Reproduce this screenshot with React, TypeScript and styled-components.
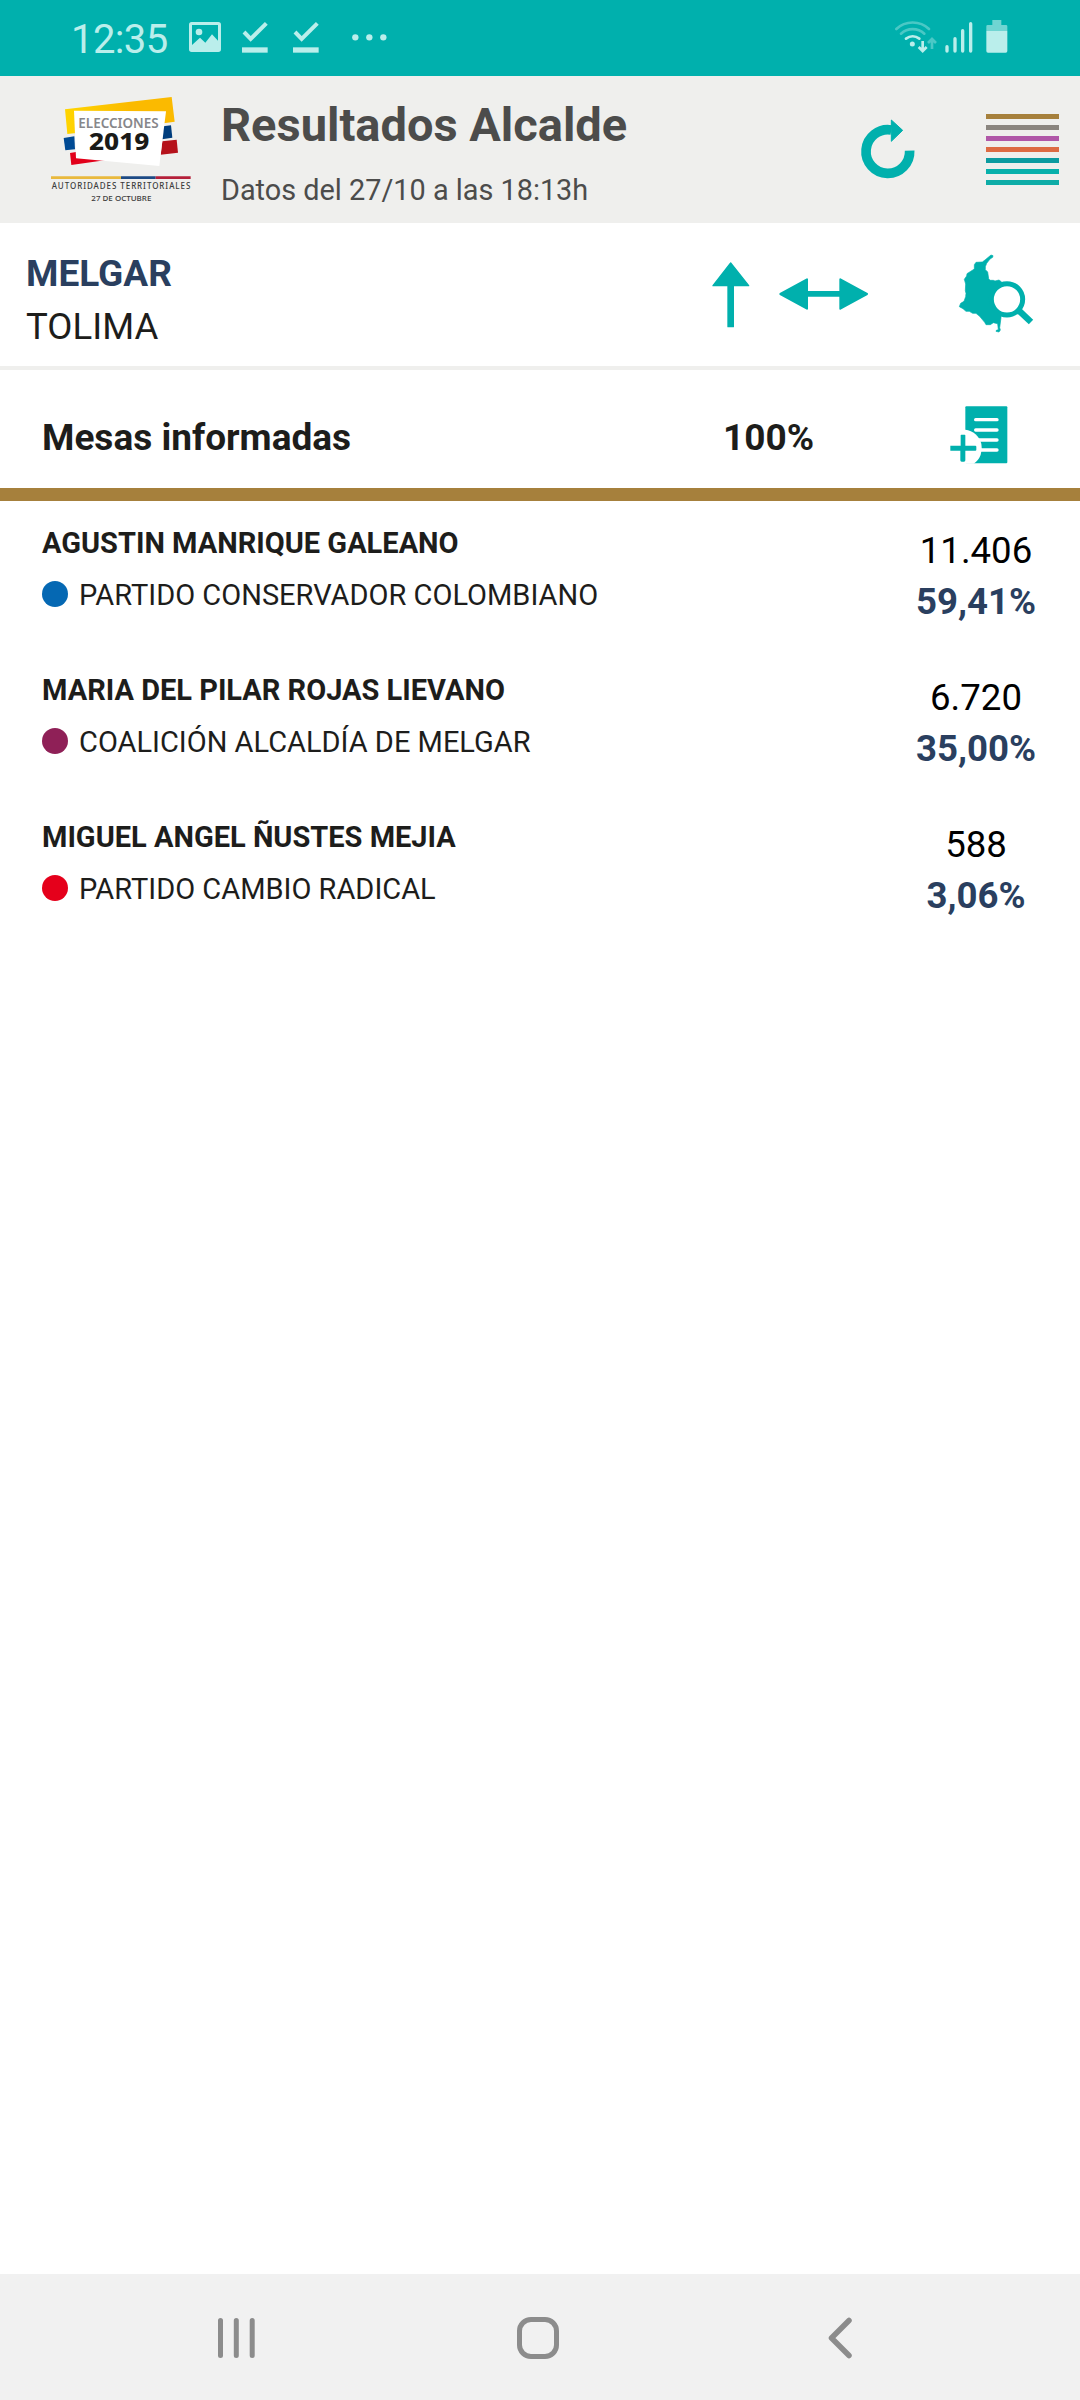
import React from 'react';
import styled, { createGlobalStyle } from 'styled-components';

const teal = '#00b0ad';
const navy = '#2a3f5f';
const ink = '#1d1d1b';

const GlobalStyle = createGlobalStyle`
  * { box-sizing: border-box; }
  body { margin: 0; background: #fff; font-family: Roboto, "Noto Sans", sans-serif; }
  svg { display: block; flex: none; overflow: visible; }
`;

const Screen = styled.div`
  display: flex;
  flex-direction: column;
  width: 1080px;
  height: 2400px;
  background: #fff;
`;

const StatusBar = styled.div`
  display: flex;
  justify-content: space-between;
  height: 76px;
  padding: 0 72px 0 71px;
  background: ${teal};
  color: #baeeeb;
`;

const StatusGroup = styled.div<{ $gap: number; $top: number }>`
  display: flex;
  align-items: flex-start;
  gap: ${(p) => p.$gap}px;
  padding-top: ${(p) => p.$top}px;
`;

const Clock = styled.span`
  width: 97px;
  margin-right: -4px;
  font-size: 40px;
  line-height: 36px;
  letter-spacing: -0.6px;
`;

const CheckSlot = styled.div`
  margin-left: -4px;
`;

const MoreSlot = styled.div`
  padding: 12px 0 0 8px;
`;

const Header = styled.header`
  display: flex;
  height: 147px;
  padding-left: 30px;
  background: #efefed;
`;

const LogoBox = styled.div`
  padding-top: 4px;
`;

const Heading = styled.div`
  width: 651px;
  padding: 19px 0 0 11px;
  color: #4c4c4b;
`;

const Title = styled.h1`
  margin: 0 0 15px;
  font-size: 47px;
  line-height: 60px;
  font-weight: 700;
  white-space: nowrap;
`;

const Subtitle = styled.div`
  font-size: 28.85px;
  line-height: 40px;
  white-space: nowrap;
`;

const RefreshButton = styled.div`
  width: 125px;
  padding-top: 43px;
`;

const MenuButton = styled.div`
  display: flex;
  flex-direction: column;
  gap: 6px;
  width: 73px;
  padding-top: 38px;
`;

const MenuBar = styled.span<{ $color: string }>`
  height: 5px;
  background: ${(p) => p.$color};
`;

const PlaceBar = styled.section`
  display: flex;
  height: 147px;
  padding-left: 26px;
  border-bottom: 4px solid #efefed;
`;

const PlaceNames = styled.div`
  width: 686px;
  padding-top: 25px;
  line-height: 52px;
`;

const Municipality = styled.div`
  color: ${navy};
  font-size: 37px;
  font-weight: 700;
`;

const Department = styled.div`
  padding-top: 1px;
  color: ${ink};
  font-size: 36.6px;
`;

const IconSlot = styled.div<{ $width: number; $top: number }>`
  width: ${(p) => p.$width}px;
  padding-top: ${(p) => p.$top}px;
`;

const TablesBar = styled.section`
  display: flex;
  height: 131px;
  padding-left: 42px;
  border-bottom: 13px solid #a6803c;
  color: ${ink};
  font-size: 37px;
  font-weight: 700;
  line-height: 52px;
`;

const TablesLabel = styled.div`
  width: 681px;
  padding-top: 42px;
`;

const TablesValue = styled.div`
  width: 227px;
  padding-top: 42px;
`;

const Results = styled.main`
  flex: 1;
`;

const Candidate = styled.article`
  display: flex;
  justify-content: space-between;
  height: 147px;
  padding-left: 42px;
`;

const CandidateInfo = styled.div`
  padding-top: 16px;
  color: ${ink};
  line-height: 52px;
  white-space: nowrap;
`;

const CandidateName = styled.div`
  font-size: 29px;
  font-weight: 700;
`;

const Party = styled.div`
  display: flex;
  align-items: center;
  gap: 11px;
  font-size: 29px;
`;

const PartyDot = styled.span<{ $color: string }>`
  width: 26px;
  height: 26px;
  margin-bottom: 2px;
  border-radius: 50%;
  background: ${(p) => p.$color};
`;

const Score = styled.div`
  width: 208px;
  padding-top: 24px;
  font-size: 36.6px;
  text-align: center;
`;

const Votes = styled.div`
  color: #000;
  line-height: 52px;
`;

const Percent = styled.div`
  color: ${navy};
  font-weight: 700;
  line-height: 50px;
`;

const NavBar = styled.nav`
  display: flex;
  align-items: flex-start;
  height: 126px;
  padding: 43px 0 0 218px;
  background: #f1f1f1;
`;

const NavItem = styled.div<{ $width: number }>`
  width: ${(p) => p.$width}px;
`;

const PictureIcon = () => (
  <svg width="32" height="30" viewBox="567 65 96 90">
    <path fill="currentColor" fillRule="evenodd" d="M575 65H655Q663 65 663 73V147Q663 155 655 155H575Q567 155 567 147V73Q567 65 575 65ZM576 74V134L600 112L616 127L636 102L654 121V74Z" />
    <circle cx="597" cy="95" r="10" fill="currentColor" />
  </svg>
);

const CheckIcon = () => (
  <svg width="26" height="31" viewBox="727 65 78 93">
    <path fill="none" stroke="currentColor" strokeWidth="12" d="M733 95L753 116L800 69" />
    <path fill="currentColor" d="M727 141H804V157H727Z" />
  </svg>
);

const DotsIcon = () => (
  <svg width="35" height="7" viewBox="1055 101 105 21" fill="currentColor">
    <circle cx="1065" cy="111" r="9.5" />
    <circle cx="1107" cy="111" r="9.5" />
    <circle cx="1149" cy="111" r="9.5" />
  </svg>
);

const WifiIcon = () => (
  <svg width="42" height="33" viewBox="107 60 126 99" fill="none" stroke="currentColor" strokeWidth="8" strokeLinecap="round">
    <g opacity="0.4">
      <path d="M111 87C138 61 182 61 209 87" />
      <path d="M125 101C145 83 175 83 195 101" />
    </g>
    <path d="M140 116C152 107 168 107 180 116" />
    <circle cx="159" cy="132" r="7.5" fill="currentColor" stroke="none" />
    <path strokeLinecap="butt" d="M190 123V152M178 141L190 153L202 141" />
    <path opacity="0.4" strokeLinecap="butt" d="M218 147V118M206 129L218 117L230 129" />
  </svg>
);

const SignalIcon = () => (
  <svg width="28" height="31" viewBox="257 60 84 93" stroke="currentColor" strokeWidth="10" strokeLinecap="round">
    <path d="M263 140V153M287 116V153M310 92V153M334 71V153" />
  </svg>
);

const BatteryIcon = () => (
  <svg width="22" height="33" viewBox="380 60 66 99" fill="currentColor">
    <path opacity="0.6" d="M399 60H426V75H440Q444 75 444 79V93H381V79Q381 75 385 75H399Z" />
    <path d="M381 93H444V153Q444 158 439 158H386Q381 158 381 153Z" />
  </svg>
);

const Logo = () => (
  <svg width="180" height="140" viewBox="0 0 540 420">
    <defs>
      <linearGradient id="yellow" x1="0" x2="1">
        <stop offset="0" stopColor="#ffd500" />
        <stop offset="0.6" stopColor="#fbba00" />
      </linearGradient>
    </defs>
    <path fill="url(#yellow)" d="M105 88L425 51L434 125L401 130L388 145L132 160L112 162Z" />
    <path fill="#004a94" d="M101 174L133 169L135 208L106 211Z" />
    <path fill="#003d7d" d="M399 139L423 136L427 173L396 178Z" />
    <path fill="#e2001a" d="M120 219L138 216L140 225L235 239L124 255Z" />
    <path fill="#b5121b" d="M397 184L440 179L444 218L392 224Z" />
    <path fill="#fff" d="M132 92L408 94L388 258L138 235Z" />
    <text x="145" y="145" textLength="241" lengthAdjust="spacingAndGlyphs" fontFamily="'Noto Sans', sans-serif" fontWeight="600" fontSize="41" fill="#87878a">ELECCIONES</text>
    <text x="177" y="209" textLength="181" lengthAdjust="spacingAndGlyphs" fontFamily="'Noto Sans', sans-serif" fontWeight="800" fontSize="70" fill="#1a1a18">2019</text>
    <path fill="#e9b93d" d="M63 289H273V297H63Z" />
    <path fill="#1d4a84" d="M273 289H377V297H273Z" />
    <path fill="#b5203a" d="M377 289H482V297H377Z" />
    <text x="65" y="326" textLength="416" fontFamily="'Noto Sans', sans-serif" fontWeight="500" fontSize="24" fill="#3c3c3b">AUTORIDADES TERRITORIALES</text>
    <text x="184" y="363" textLength="180" lengthAdjust="spacingAndGlyphs" fontFamily="'Noto Sans', sans-serif" fontWeight="500" fontSize="22.5" fill="#3c3c3b">27 DE OCTUBRE</text>
  </svg>
);

const RefreshIcon = () => (
  <svg width="54" height="60" viewBox="93 118 162 180">
    <path fill="none" stroke={teal} strokeWidth="29" strokeLinejoin="round" d="M239 213A65.500 65.500 0 1 1 184 151" />
    <path fill={teal} stroke={teal} strokeWidth="3" strokeLinejoin="round" d="M184 121L218 152L184 185Z" />
  </svg>
);

const UpArrowIcon = () => (
  <svg width="38" height="66" viewBox="95 125 114 198" fill={teal} stroke={teal} strokeWidth="4" strokeLinejoin="round">
    <path d="M151 128L205 196H159V319H143V196H98Z" />
  </svg>
);

const SwapIcon = () => (
  <svg width="90" height="32" viewBox="296 175 270 96" fill={teal} stroke={teal} strokeWidth="6" strokeLinejoin="round">
    <path d="M300 223L380 179V217H480V179L560 223L480 267V228H380V267Z" />
  </svg>
);

const MapSearchIcon = () => (
  <svg width="76" height="80" viewBox="87 42 228 240">
    <path
      fill={teal}
      stroke={teal}
      strokeWidth="2"
      strokeLinejoin="round"
      d="M183 45L189 47L188 52L180 57L170 70L166 80L166 89L173 96L176 116L180 121L190 121L195 123L207 120L215 126L213 233L209 263L211 270L207 276L198 274L199 271L205 269L203 251L190 248L181 254L168 254L164 247L149 229L138 220L128 220L118 214L108 214L99 206L88 200L92 190L102 184L107 170L108 160L106 152L107 132L103 118L110 108L111 101L133 87L133 74L138 67L157 66L165 60Z"
    />
    <path stroke={teal} strokeWidth="19" d="M266 211L303 246" />
    <circle cx="231" cy="178" r="47" fill="#fff" stroke={teal} strokeWidth="15" />
  </svg>
);

const DocumentAddIcon = () => (
  <svg width="58" height="58" viewBox="809 559 174 174">
    <rect x="855" y="560" width="126" height="171" rx="3" fill={teal} />
    <path stroke="#fff" strokeWidth="10" strokeLinecap="round" d="M886 600H950M886 631H950M886 661H950M886 691H950" />
    <path fill="#fff" d="M809 630H855A56 56 0 0 1 880 732H809Z" />
    <path fill={teal} d="M841 647Q841 645 843 645H853Q855 645 855 647V678H885Q888 678 888 681V690Q888 693 885 693H855V722Q855 726 851 726H844Q840 726 840 722V693H810V678H841Z" />
  </svg>
);

const RecentsIcon = () => (
  <svg width="37" height="42" viewBox="0 0 37 42" stroke="#8c8c8c" strokeWidth="5" strokeLinecap="round">
    <path d="M2.500 3.500V38.500M18.300 3.500V38.500M34.200 3.500V38.500" />
  </svg>
);

const HomeIcon = () => (
  <svg width="42" height="42" viewBox="0 0 42 42">
    <rect x="2.500" y="2.500" width="37" height="37" rx="11.500" fill="none" stroke="#8c8c8c" strokeWidth="5" />
  </svg>
);

const BackIcon = () => (
  <svg width="25" height="42" viewBox="0 0 25 42">
    <path fill="none" stroke="#8c8c8c" strokeWidth="5.500" strokeLinecap="round" strokeLinejoin="round" d="M21 3.500L3.500 21L21 38.500" />
  </svg>
);

const menuColors = ['#a6803c', '#8a857f', '#b057a8', '#dd6b43', '#0c9ba0', '#07b0ab', '#0eaca7'];

const candidates = [
  { name: 'AGUSTIN MANRIQUE GALEANO', party: 'PARTIDO CONSERVADOR COLOMBIANO', color: '#0568b3', votes: '11.406', percent: '59,41%' },
  { name: 'MARIA DEL PILAR ROJAS LIEVANO', party: 'COALICIÓN ALCALDÍA DE MELGAR', color: '#8f2057', votes: '6.720', percent: '35,00%' },
  { name: 'MIGUEL ANGEL ÑUSTES MEJIA', party: 'PARTIDO CAMBIO RADICAL', color: '#e5001b', votes: '588', percent: '3,06%' },
];

export default function App() {
  return (
    <>
      <GlobalStyle />
      <Screen>
        <StatusBar>
          <StatusGroup $gap={25} $top={22}>
            <Clock>12:35</Clock>
            <PictureIcon />
            <CheckSlot><CheckIcon /></CheckSlot>
            <CheckIcon />
            <MoreSlot><DotsIcon /></MoreSlot>
          </StatusGroup>
          <StatusGroup $gap={0} $top={20}>
            <IconSlot $width={50} $top={0}><WifiIcon /></IconSlot>
            <IconSlot $width={41} $top={0}><SignalIcon /></IconSlot>
            <BatteryIcon />
          </StatusGroup>
        </StatusBar>

        <Header>
          <LogoBox><Logo /></LogoBox>
          <Heading>
            <Title>Resultados Alcalde</Title>
            <Subtitle>Datos del 27/10 a las 18:13h</Subtitle>
          </Heading>
          <RefreshButton><RefreshIcon /></RefreshButton>
          <MenuButton>
            {menuColors.map((c) => <MenuBar key={c} $color={c} />)}
          </MenuButton>
        </Header>

        <PlaceBar>
          <PlaceNames>
            <Municipality>MELGAR</Municipality>
            <Department>TOLIMA</Department>
          </PlaceNames>
          <IconSlot $width={67} $top={39}><UpArrowIcon /></IconSlot>
          <IconSlot $width={180} $top={55}><SwapIcon /></IconSlot>
          <IconSlot $width={76} $top={31}><MapSearchIcon /></IconSlot>
        </PlaceBar>

        <TablesBar>
          <TablesLabel>Mesas informadas</TablesLabel>
          <TablesValue>100%</TablesValue>
          <IconSlot $width={58} $top={36}><DocumentAddIcon /></IconSlot>
        </TablesBar>

        <Results>
          {candidates.map((c) => (
            <Candidate key={c.name}>
              <CandidateInfo>
                <CandidateName>{c.name}</CandidateName>
                <Party><PartyDot $color={c.color} />{c.party}</Party>
              </CandidateInfo>
              <Score>
                <Votes>{c.votes}</Votes>
                <Percent>{c.percent}</Percent>
              </Score>
            </Candidate>
          ))}
        </Results>

        <NavBar>
          <NavItem $width={299}><RecentsIcon /></NavItem>
          <NavItem $width={311}><HomeIcon /></NavItem>
          <NavItem $width={25}><BackIcon /></NavItem>
        </NavBar>
      </Screen>
    </>
  );
}
